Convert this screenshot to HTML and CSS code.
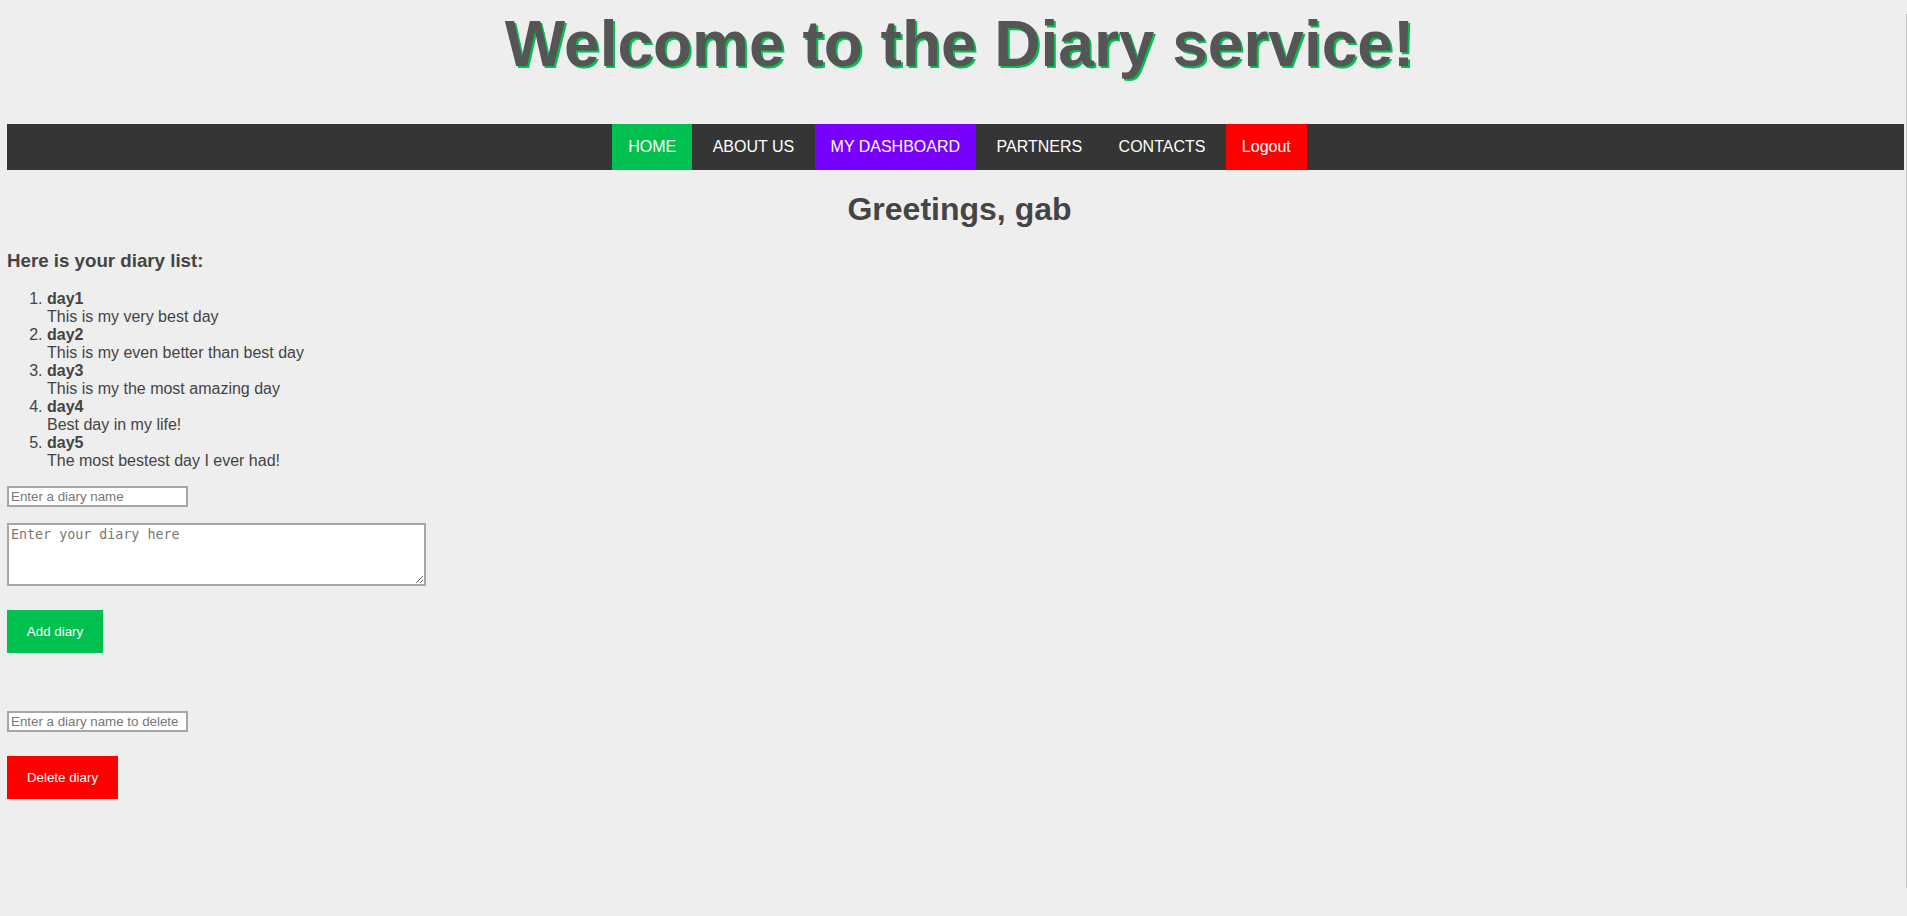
FILE: index.html
```html
<!DOCTYPE html>
<html lang="en">
<head>
<meta charset="utf-8">
<title>Diary service</title>
<link rel="stylesheet" href="styles.css">
</head>
<body>
<header class="site-header">
  <h1 class="site-title">Welcome to the Diary service!</h1>
</header>
<nav class="topnav">
  <a class="nav-link nav-home" href="#">HOME</a>
  <a class="nav-link" href="#">ABOUT US</a>
  <a class="nav-link nav-dashboard" href="#">MY DASHBOARD</a>
  <a class="nav-link" href="#">PARTNERS</a>
  <a class="nav-link" href="#">CONTACTS</a>
  <a class="nav-link nav-logout" href="#">Logout</a>
</nav>
<main class="content">
  <h2 class="greeting">Greetings, gab</h2>
  <h3 class="list-title">Here is your diary list:</h3>
  <ol class="diary-list">
    <li><strong>day1</strong><br>This is my very best day</li>
    <li><strong>day2</strong><br>This is my even better than best day</li>
    <li><strong>day3</strong><br>This is my the most amazing day</li>
    <li><strong>day4</strong><br>Best day in my life!</li>
    <li><strong>day5</strong><br>The most bestest day I ever had!</li>
  </ol>
  <form class="diary-form add-form">
    <input class="text-input" type="text" placeholder="Enter a diary name">
    <textarea class="diary-text" placeholder="Enter your diary here"></textarea>
    <button class="btn btn-add" type="button">Add diary</button>
  </form>
  <form class="diary-form delete-form">
    <input class="text-input" type="text" placeholder="Enter a diary name to delete">
    <button class="btn btn-delete" type="button">Delete diary</button>
  </form>
</main>
<div class="edge-line"></div>
</body>
</html>
```

FILE: styles.css
```css
html, body {
  background: #eeeeee;
}
body {
  margin: 0 3px 0 7px;
  font-family: "Liberation Sans", Arial, sans-serif;
  color: #444444;
}
.site-title {
  margin: 7px 0 43px 0;
  padding-left: 8px;
  text-align: center;
  font-size: 64px;
  line-height: 74px;
  font-weight: bold;
  color: #555555;
  text-shadow: 2px 2px 0 #00c150;
}
.topnav {
  display: flex;
  justify-content: center;
  gap: 4.45px;
  background: #353535;
  height: 46px;
  padding-left: 8px;
}
.nav-link {
  display: block;
  padding: 14px 16px;
  line-height: 18px;
  font-size: 16px;
  color: #ffffff;
  text-decoration: none;
}
.nav-home {
  background: #00c150;
}
.nav-dashboard {
  background: #7700ff;
}
.nav-logout {
  background: #ff0000;
}
.greeting {
  margin: 21px 0 22px 0;
  padding-left: 8px;
  text-align: center;
  font-size: 32px;
  line-height: 37px;
  font-weight: bold;
}
.list-title {
  margin: 0 0 18px 0;
  font-size: 18.72px;
  line-height: 22px;
  font-weight: bold;
}
.diary-list {
  margin: 0 0 16px 0;
  padding-left: 40px;
  font-size: 16px;
  line-height: 18px;
}
.diary-form {
  display: flex;
  flex-direction: column;
  align-items: flex-start;
  margin: 0;
}
.text-input {
  box-sizing: border-box;
  width: 181px;
  height: 21px;
  padding: 1px 2px;
  border: 2px solid #a6a6a6;
  background: #ffffff;
  font-family: "Liberation Sans", Arial, sans-serif;
  font-size: 13.33px;
  color: #222;
}
.text-input::placeholder,
.diary-text::placeholder {
  color: #777777;
}
.diary-text {
  box-sizing: border-box;
  width: 419px;
  height: 63px;
  margin-top: 16px;
  padding: 2px;
  border: 2px solid #a6a6a6;
  background: #ffffff;
  font-family: "DejaVu Sans Mono", "Liberation Mono", monospace;
  font-size: 13.33px;
}
.btn {
  box-sizing: border-box;
  height: 43px;
  margin-top: 24px;
  padding: 0;
  border: none;
  color: #ffffff;
  white-space: nowrap;
  text-align: center;
  font-family: "Liberation Sans", Arial, sans-serif;
  font-size: 13.33px;
}
.btn-add {
  width: 96px;
  background: #00c150;
}
.btn-delete {
  width: 111px;
  background: #ff0000;
}
.delete-form {
  margin-top: 58px;
}
.edge-line {
  position: fixed;
  top: 14px;
  left: 1906px;
  width: 1px;
  height: 874px;
  background: #c2c2c2;
}
```
